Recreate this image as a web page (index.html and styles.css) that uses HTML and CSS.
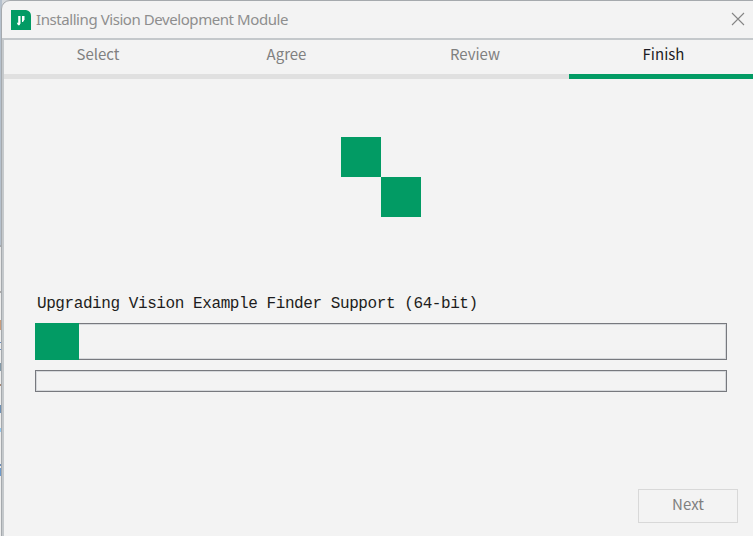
FILE: index.html
```html
<!DOCTYPE html>
<html lang="en">
<head>
<meta charset="utf-8">
<title>Installing Vision Development Module</title>
<link rel="stylesheet" href="styles.css">
</head>
<body>
<div class="desktop">
  <div class="backdrop"></div>
  <main class="window">
    <header class="titlebar">
      <svg class="logo" width="20" height="20" viewBox="0 0 20 20" aria-hidden="true">
        <path fill="#029b64" d="M0 0H15Q20 1 20 6V20H0Z"/>
        <path fill="#fff" d="M7.2 6H9.5V13.5L8.5 15.2H7L5.8 12.8H7.2Z"/>
        <path fill="#fff" d="M11 6H13.5V9.5L12 12H11Z"/>
      </svg>
      <h1 class="title">Installing Vision Development Module</h1>
      <svg class="close" width="12" height="12" viewBox="0 0 12 12" aria-hidden="true">
        <path d="M0 0L12 12M12 0L0 12" fill="none" stroke="#858585" stroke-width="1.1"/>
      </svg>
    </header>
    <section class="content">
      <nav class="steps">
        <div class="step">Select</div>
        <div class="step">Agree</div>
        <div class="step">Review</div>
        <div class="step active">Finish</div>
      </nav>
      <div class="spinner"><i></i><i></i></div>
      <p class="status">Upgrading Vision Example Finder Support (64-bit)</p>
      <div class="progress large"><div class="fill"></div></div>
      <div class="progress small"></div>
      <footer class="actions"><button class="next" disabled>Next</button></footer>
    </section>
  </main>
</div>
</body>
</html>
```

FILE: styles.css
```css
* { box-sizing: border-box; }
body { margin: 0; overflow: hidden; background: #d5d9dd; }
.desktop { position: relative; width: 753px; height: 536px; padding-left: 1px; overflow: hidden; }
.backdrop {
  position: absolute; left: 0; top: 0; width: 2px; height: 536px;
  background: linear-gradient(#b5c0cc 0 245px, #a5a9ad 245px 247px, #e8e8e8 247px 291px, #aaa 291px 293px,
    #ededed 293px 320px, #c99c7c 320px 330px, #ededed 330px 342px, #6c8fc0 342px 343px, #ededed 343px 349px,
    #6c8fc0 349px 350px, #ededed 350px 363px, #8299a8 363px 371px, #ededed 371px 384px, #a88975 384px 386px,
    #ededed 386px 405px, #6f91b4 405px 413px, #ededed 413px 428px, #96c7ed 428px 432px, #ededed 432px 464px,
    #6d8eb8 464px 466px, #ededed 466px 468px, #6f9bcb 468px 476px, #ededed 476px);
}
.window {
  position: relative; width: 763px; height: 540px;
  border: 1px solid #a5a9ad; border-radius: 9px 0 0 0;
  background: #f3f3f3; overflow: hidden;
}
.titlebar { display: flex; align-items: center; height: 37px; padding: 0 20px 0 9px; }
.logo { display: block; }
.title {
  margin: -1px auto 0 5px; color: #8e8e8e; white-space: nowrap;
  font: 400 15px/20px "Noto Sans", sans-serif; letter-spacing: -0.43px;
}
.close { position: relative; top: -1px; margin-right: -1px; overflow: visible; }
.content {
  height: 503px; border: solid #c4c8cb; border-width: 2px 0 0 2px;
  font-family: "Noto Sans CJK SC", sans-serif;
}
.steps { display: grid; grid-template-columns: 188px 189px 188px 1fr; height: 39px; }
.step {
  padding-top: 2px; text-align: center; color: #808080;
  font-size: 15px; line-height: 24px; border-bottom: 5px solid #e0e0e0;
}
.active { color: #1d1d24; border-color: #029b64; padding-right: 5px; }
.spinner { display: grid; grid-template-columns: 40px 40px; width: 80px; height: 80px; margin: 58px 0 0 337px; }
.spinner i { height: 40px; background: #029b64; }
.spinner i:last-child { grid-area: 2 / 2; }
.status {
  margin: 77px 0 9px 33px; color: #1d1d20; white-space: nowrap;
  font: 16px/20px "Liberation Mono", monospace; letter-spacing: -0.42px;
}
.progress { width: 692px; margin-left: 31px; border: 1px solid #77797e; box-shadow: inset 0 0 0 1px #d6d8db; }
.large { height: 37px; }
.small { height: 22px; margin-top: 10px; }
.fill { position: relative; width: 44px; height: 37px; margin: -1px; background: #029b64; }
.actions { display: flex; margin: 97px 0 0 634px; }
.next {
  width: 100px; height: 34px; padding: 0 0 4px; border: 1px solid #d8d8d8;
  background: transparent; color: #808080; font: 15px/20px "Noto Sans CJK SC", sans-serif;
}
```
